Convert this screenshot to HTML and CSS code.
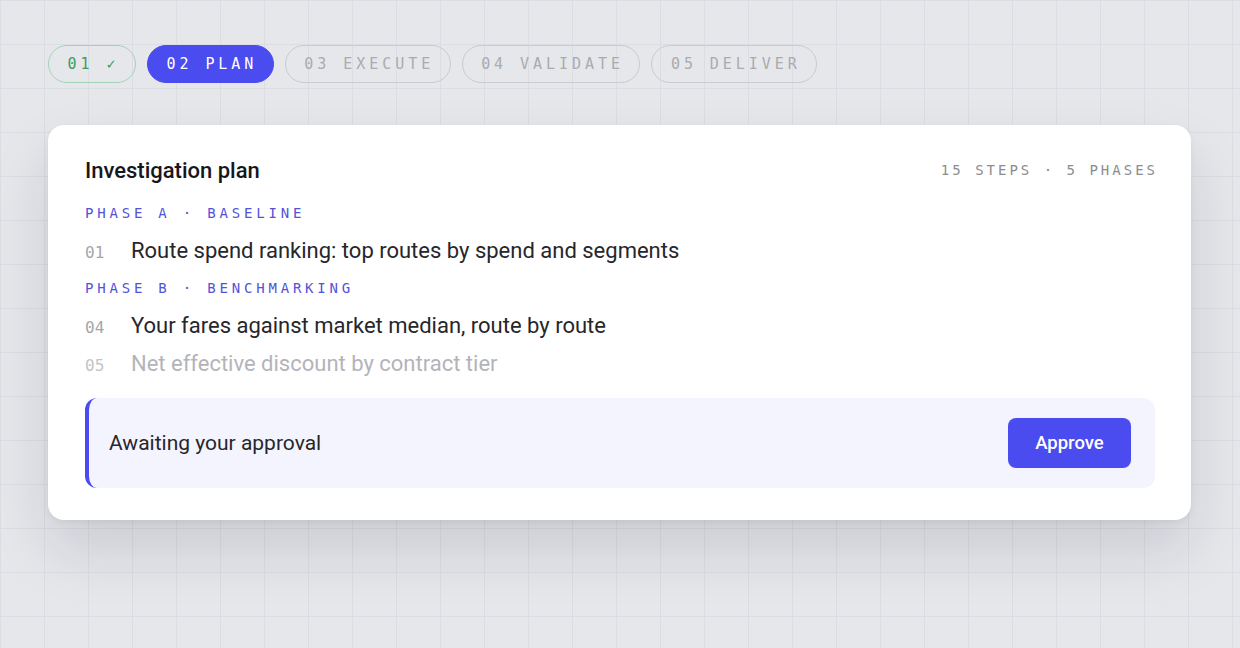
FILE: index.html
```html
<!DOCTYPE html>
<html lang="en">
<head>
    <meta charset="UTF-8">
    <meta name="viewport" content="width=device-width, initial-scale=1.0">
    <title>Investigation plan</title>
    <link rel="stylesheet" href="styles.css">
</head>
<body>
    <nav class="steps">
        <span class="pill done">01 ✓</span>
        <span class="pill active">02 PLAN</span>
        <span class="pill">03 EXECUTE</span>
        <span class="pill">04 VALIDATE</span>
        <span class="pill">05 DELIVER</span>
    </nav>

    <section class="card">
        <header class="card-head">
            <h2>Investigation plan</h2>
            <span class="meta">15 STEPS · 5 PHASES</span>
        </header>

        <div class="plan">
            <div class="phase">PHASE A · BASELINE</div>
            <div class="item"><span class="num">01</span>Route spend ranking: top routes by spend and segments</div>
            <div class="phase">PHASE B · BENCHMARKING</div>
            <div class="item"><span class="num">04</span>Your fares against market median, route by route</div>
            <div class="item faded"><span class="num">05</span>Net effective discount by contract tier</div>
        </div>

        <div class="approval">
            <span>Awaiting your approval</span>
            <button class="approve">Approve</button>
        </div>
    </section>
</body>
</html>
```

FILE: styles.css
```css
body {
    margin: 0;
    height: 648px;
    padding: 45px 48px 0;
    box-sizing: border-box;
    font-family: Roboto, "Liberation Sans", sans-serif;
    color: #1f1f23;
    background-color: #e6e7eb;
    background-image:
        linear-gradient(to right, #dcdde2 1px, transparent 1px),
        linear-gradient(to bottom, #dcdde2 1px, transparent 1px);
    background-size: 44px 44px;
}
.steps {
    display: flex;
    gap: 11px;
}
.pill {
    font-family: "DejaVu Sans Mono", "Liberation Mono", monospace;
    font-size: 15px;
    letter-spacing: 3.95px;
    line-height: 36px;
    padding: 0 15.5px 0 18.5px;
    border: 1px solid #c9cbd1;
    border-radius: 20px;
    color: #a9abb1;
}
.pill.done {
    color: #3c9c63;
    border-color: #a3d3b6;
}
.pill.active {
    background-color: #4a4cef;
    border-color: #4a4cef;
    color: #fff;
}
.card {
    margin-top: 42px;
    width: 1143px;
    box-sizing: border-box;
    background: #fff;
    border-radius: 16px;
    padding: 33px 36px 32px 37px;
    box-shadow: 0 30px 60px rgba(20, 22, 40, 0.13), 0 2px 6px rgba(20, 22, 40, 0.05);
}
.card-head {
    display: flex;
    justify-content: space-between;
    align-items: center;
    height: 24px;
    margin-bottom: 13px;
}
.card-head h2 {
    margin: 0;
    font-size: 22px;
    font-weight: 500;
    color: #17171b;
}
.meta {
    font-family: "DejaVu Sans Mono", "Liberation Mono", monospace;
    font-size: 14px;
    letter-spacing: 3px;
    color: #8b8c91;
    margin-right: -3px;
}
.phase {
    font-family: "DejaVu Sans Mono", "Liberation Mono", monospace;
    font-size: 14px;
    letter-spacing: 3.8px;
    line-height: 37px;
    color: #5253d8;
}
.item {
    font-size: 22px;
    line-height: 38px;
    height: 38px;
    color: #26262b;
}
.num {
    display: inline-block;
    width: 46px;
    font-family: "DejaVu Sans Mono", "Liberation Mono", monospace;
    font-size: 16px;
    color: #a5a6ab;
}
.faded {
    color: #b3b4b9;
}
.faded .num {
    color: #c3c4c8;
}
.approval {
    margin-top: 15px;
    height: 90px;
    display: flex;
    align-items: center;
    justify-content: space-between;
    padding: 0 24px 0 20px;
    background: #f4f4fe;
    border-left: 4px solid #4a4cef;
    border-radius: 12px;
    font-size: 21px;
    color: #26262b;
}
.approve {
    font-family: Roboto, "Liberation Sans", sans-serif;
    font-size: 18.5px;
    font-weight: 500;
    color: #fff;
    background: #4a4cef;
    border: none;
    border-radius: 8px;
    width: 123px;
    height: 50px;
    cursor: pointer;
}
```
